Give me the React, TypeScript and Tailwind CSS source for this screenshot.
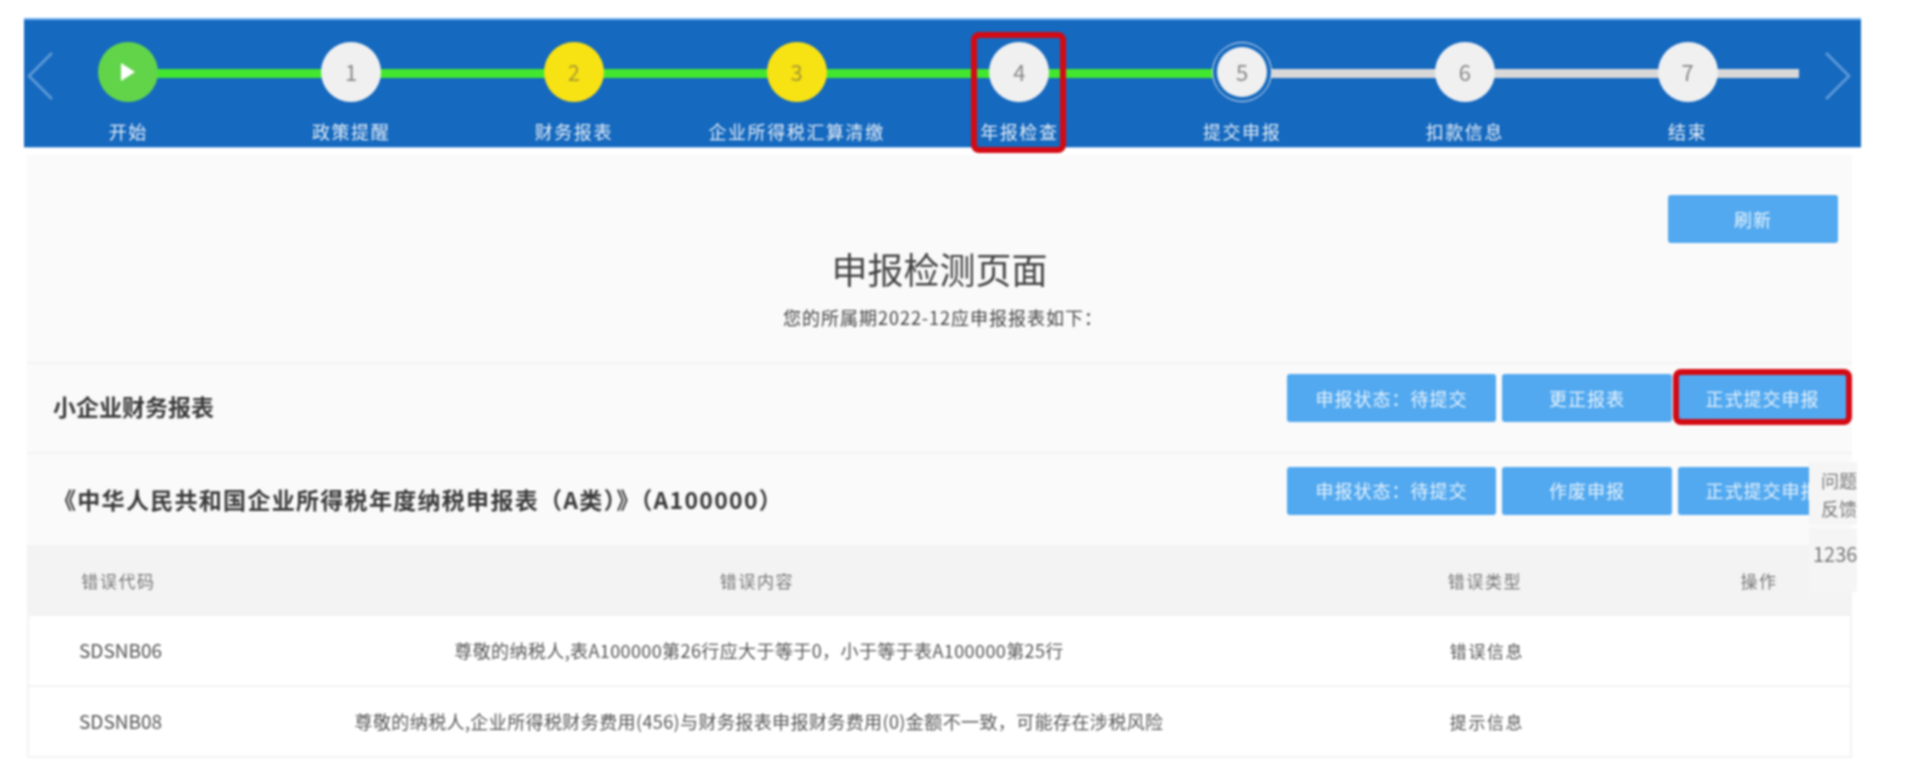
const FONT = "font-['Noto_Sans_CJK_SC','Noto_Sans',sans-serif]";

type StepType = {
  label: string;
  mark: string;
  tone: "start" | "done" | "warn" | "current" | "todo";
};

const STEPS: ReadonlyArray<StepType> = [
  { label: "开始", mark: "", tone: "start" },
  { label: "政策提醒", mark: "1", tone: "todo" },
  { label: "财务报表", mark: "2", tone: "warn" },
  { label: "企业所得税汇算清缴", mark: "3", tone: "warn" },
  { label: "年报检查", mark: "4", tone: "todo" },
  { label: "提交申报", mark: "5", tone: "current" },
  { label: "扣款信息", mark: "6", tone: "todo" },
  { label: "结束", mark: "7", tone: "todo" },
];

const ROWS = [
  {
    code: "SDSNB06",
    text: "尊敬的纳税人,表A100000第26行应大于等于0，小于等于表A100000第25行",
    type: "错误信息",
  },
  {
    code: "SDSNB08",
    text: "尊敬的纳税人,企业所得税财务费用(456)与财务报表申报财务费用(0)金额不一致，可能存在涉税风险",
    type: "提示信息",
  },
];

const Chevron = ({ flip }: { flip?: boolean }) => (
  <svg width="26" height="48" viewBox="0 0 26 48" fill="none" className={flip ? "rotate-180" : ""}>
    <path d="M25 1 2 24l23 23" stroke="#5b97d6" strokeWidth="3" />
  </svg>
);

const StepCircle = ({ step }: { step: StepType }) => {
  if (step.tone === "start") {
    return (
      <div className="flex h-[60px] w-[60px] items-center justify-center rounded-full bg-[#62d44a]">
        <svg width="18" height="22" viewBox="0 0 18 22">
          <path d="M2 2v18l14-9z" fill="#ffffff" />
        </svg>
      </div>
    );
  }
  if (step.tone === "current") {
    return (
      <div className="flex h-[60px] w-[60px] items-center justify-center rounded-full border border-[#dfe6ee] bg-[#1569bf]">
        <div className="flex h-[50px] w-[50px] items-center justify-center rounded-full bg-[#f0f0f0] pb-[2px] text-[22px] text-[#888888]">
          {step.mark}
        </div>
      </div>
    );
  }
  return (
    <div
      className={`flex h-[60px] w-[60px] items-center justify-center rounded-full pb-[2px] text-[22px] ${
        step.tone === "warn" ? "bg-[#f7e214] text-[#a89a30]" : "bg-[#f0f0f0] text-[#888888]"
      }`}
    >
      {step.mark}
    </div>
  );
};

const Btn = ({ label, className }: { label: string; className: string }) => (
  <div
    className={`flex items-center justify-center rounded-[3px] bg-[#52a9f0] text-[18px] tracking-[1px] text-[#e6f2fc] ${className}`}
  >
    {label}
  </div>
);

export default function App() {
  return (
    <div className={`relative h-[783px] w-[1906px] overflow-hidden bg-white pt-[18px] blur-[1px] ${FONT}`}>
      {/* 步骤条 */}
      <div className="relative ml-[24px] h-[130px] w-[1837px] border-t-2 border-b border-t-[#6fb0ee] border-b-[#a8cdf0] bg-[#1569bf]">
        <div className="absolute left-[3px] top-[32px]">
          <Chevron />
        </div>
        <div className="absolute right-[10px] top-[32px]">
          <Chevron flip />
        </div>
        <div className="relative -ml-[7px] grid w-[1782px] grid-cols-8 pt-[22px]">
          <div className="absolute left-[111px] right-0 top-[49px] flex h-[9px]">
            <div className="w-[1112px] bg-[#42e62e]" />
            <div className="flex-1 bg-[#d8d8d8]" />
          </div>
          {STEPS.map((step) => (
            <div key={step.label} className="relative flex flex-col items-center">
              <StepCircle step={step} />
              <div className="mt-[17px] whitespace-nowrap text-[18px] leading-[24px] tracking-[1.6px] text-[#e4edf7]">
                {step.label}
              </div>
            </div>
          ))}
        </div>
      </div>

      {/* 内容区 */}
      <div className="ml-[27px] mt-[7px] w-[1825px] bg-[#fafafa] text-[#333333]">
        <div className="relative h-[207px]">
          <div className="flex justify-end pr-[14px] pt-[40px]">
            <Btn label="刷新" className="h-[48px] w-[170px]" />
          </div>
          <div className="mt-[1px] text-center text-[36px] leading-[48px] text-[#444444]">申报检测页面</div>
          <div className="mt-[13px] pl-[7px] text-center text-[18px] leading-[24px] tracking-[1px] text-[#444444]">
            您的所属期2022-12应申报报表如下：
          </div>
        </div>

        <div className="flex h-[90px] items-center border-t-2 border-[#f3f3f3] pl-[26px] pr-[5px]">
          <div className="-translate-y-[2px] text-[23px] font-bold text-[#3a3a3a]">小企业财务报表</div>
          <div className="ml-auto flex -translate-y-[10px] gap-[6px]">
            <Btn label="申报状态：待提交" className="h-[48px] w-[209px]" />
            <Btn label="更正报表" className="h-[48px] w-[170px]" />
            <Btn label="正式提交申报" className="h-[48px] w-[169px]" />
          </div>
        </div>

        <div className="flex h-[93px] items-center border-t-2 border-[#f3f3f3] pl-[26px] pr-[5px]">
          <div className="whitespace-nowrap text-[23px] font-bold tracking-[1.3px] text-[#3a3a3a]">
            《中华人民共和国企业所得税年度纳税申报表（A类）》（A100000）
          </div>
          <div className="ml-auto flex -translate-y-[9px] gap-[6px]">
            <Btn label="申报状态：待提交" className="h-[48px] w-[209px]" />
            <Btn label="作废申报" className="h-[48px] w-[170px]" />
            <Btn label="正式提交申报" className="h-[48px] w-[169px]" />
          </div>
        </div>

        <div className="grid h-[71px] grid-cols-[183px_1094px_362px_1fr] items-center bg-[#f3f3f3] text-center text-[17px] tracking-[1.6px] text-[#777777]">
          <div>错误代码</div>
          <div>错误内容</div>
          <div>错误类型</div>
          <div>操作</div>
        </div>

        {ROWS.map((row) => (
          <div
            key={row.code}
            className="grid h-[71px] grid-cols-[183px_1094px_362px_1fr] items-center border-x-2 border-b-2 border-[#f3f3f3] bg-white text-center text-[18px] tracking-[0.4px] text-[#555555]"
          >
            <div className="text-[19px] tracking-[0px]">{row.code}</div>
            <div>{row.text}</div>
            <div className="text-[17px] tracking-[1.6px]">{row.type}</div>
            <div />
          </div>
        ))}
      </div>

      {/* 红色标注框 */}
      <div className="absolute left-[971px] top-[32px] h-[121px] w-[95px] rounded-[8px] border-[6px] border-[#d40a14]" />
      <div className="absolute left-[1673px] top-[369px] h-[56px] w-[179px] rounded-[8px] border-[6px] border-[#d40a14]" />

      {/* 右侧悬浮 */}
      <div className="absolute left-[1809px] top-[462px] w-[48px] overflow-hidden text-[18px] text-[#777777]">
        <div className="flex h-[63px] flex-col items-start justify-center bg-[#f5f5f5] pl-[12px] leading-[28px]">
          <div className="w-[40px]">问题</div>
          <div className="w-[40px]">反馈</div>
        </div>
        <div className="mt-[3px] h-[64px] whitespace-nowrap bg-[#f5f5f5] pl-[4px] pt-[12px] text-[20px] leading-[28px]">12366</div>
      </div>
    </div>
  );
}
